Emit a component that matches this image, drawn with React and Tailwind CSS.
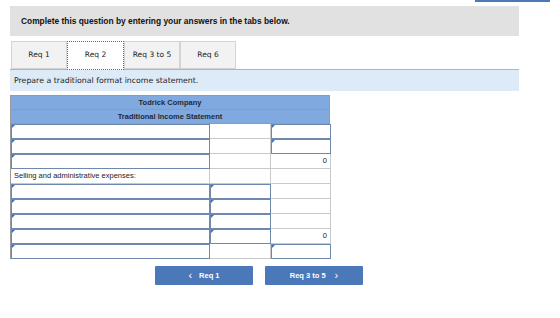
import React from "react";

const Marker = () => (
  <span className="absolute left-0 top-0 h-0 w-0 border-t-[3px] border-r-[3px] border-t-[#3b73c4] border-r-transparent" />
);

const InputCell = () => (
  <div className="relative h-full border border-[#6f88ad] bg-white">
    <Marker />
  </div>
);

const Plain = ({ children, right }) => (
  <div
    className={`flex h-full items-center border-r border-b border-[#c9c9c9] bg-white px-[3px] text-[7.5px] text-[#222] ${
      right ? "justify-end" : ""
    }`}
  >
    {children}
  </div>
);

const rows = [
  ["in", "empty", "in"],
  ["in", "empty", "in"],
  ["in", "empty", "0"],
  ["label", "empty", "empty"],
  ["in", "in", "empty"],
  ["in", "in", "empty"],
  ["in", "in", "empty"],
  ["in", "in", "0"],
  ["in", "empty", "in"],
];

function Cell({ kind }) {
  if (kind === "in") return <InputCell />;
  if (kind === "label")
    return <Plain>Selling and administrative expenses:</Plain>;
  if (kind === "0") return <Plain right>0</Plain>;
  return <Plain />;
}

export default function App() {
  return (
    <div
      className="relative h-[318px] w-[560px] bg-white"
      style={{ fontFamily: '"DejaVu Sans", Verdana, sans-serif' }}
    >
      <div className="flex h-[2px]">
        <div className="ml-[475px] w-[75px] bg-[#4a7ab8]" />
      </div>
      <div className="ml-[10px] mt-[4px] flex h-[30px] w-[509px] items-center bg-[#e1e1e1] pl-[11px]">
        <span
          className="text-[8.4px] font-bold text-[#111]"
          style={{ fontFamily: '"Liberation Sans", Arial, sans-serif' }}
        >
          Complete this question by entering your answers in the tabs below.
        </span>
      </div>

      <div className="ml-[11px] mt-[5px] flex h-[28px] items-start">
        {["Req 1", "Req 2", "Req 3 to 5", "Req 6"].map((t, i) =>
          i === 1 ? (
            <div
              key={t}
              className="relative z-10 flex h-[29px] w-[57px] items-center justify-center border border-dotted border-[#3f6fb0] bg-white pb-[1px] text-[7.5px] text-[#222]"
            >
              {t}
            </div>
          ) : (
            <div
              key={t}
              className="flex h-[28px] w-[56px] items-center justify-center border border-[#d4d4d4] bg-[#f2f2f2] text-[7.5px] text-[#222]"
            >
              {t}
            </div>
          )
        )}
      </div>

      <div className="ml-[10px] flex h-[22px] w-[509px] items-center border-t border-[#b5b5b5] bg-[#ddebf8] pl-[4px] text-[7.8px] text-[#222]">
        Prepare a traditional format income statement.
      </div>

      <div
        className="ml-[10px] mt-[4px] w-[320px] border-l border-[#9a9a9a]"
        style={{ fontFamily: '"Liberation Sans", Arial, sans-serif' }}
      >
        <div className="flex h-[15px] items-center justify-center border border-l-0 border-[#9a9a9a] bg-[#80a9e0] text-[7.5px] font-bold text-[#1e2a3a]">
          Todrick Company
        </div>
        <div className="flex h-[14px] items-center justify-center border-r border-b border-[#9a9a9a] bg-[#80a9e0] text-[7.5px] font-bold text-[#1e2a3a]">
          Traditional Income Statement
        </div>
        {rows.map((r, i) => (
          <div key={i} className="grid h-[15px] grid-cols-[199px_61px_60px]">
            {r.map((k, j) => (
              <Cell key={j} kind={k} />
            ))}
          </div>
        ))}
      </div>

      <div
        className="ml-[155px] mt-[7px] flex gap-[12px]"
        style={{ fontFamily: '"Liberation Sans", Arial, sans-serif' }}
      >
        <div className="flex h-[19px] w-[98px] items-center justify-center gap-[7px] rounded-[1px] bg-[#4a78b8] text-[7.5px] font-bold text-white">
          <span className="text-[11px] font-normal leading-none">‹</span>
          <span>Req 1</span>
        </div>
        <div className="flex h-[19px] w-[98px] items-center justify-center gap-[9px] rounded-[1px] bg-[#4a78b8] text-[7.5px] font-bold text-white">
          <span>Req 3 to 5</span>
          <span className="text-[11px] font-normal leading-none">›</span>
        </div>
      </div>
    </div>
  );
}
